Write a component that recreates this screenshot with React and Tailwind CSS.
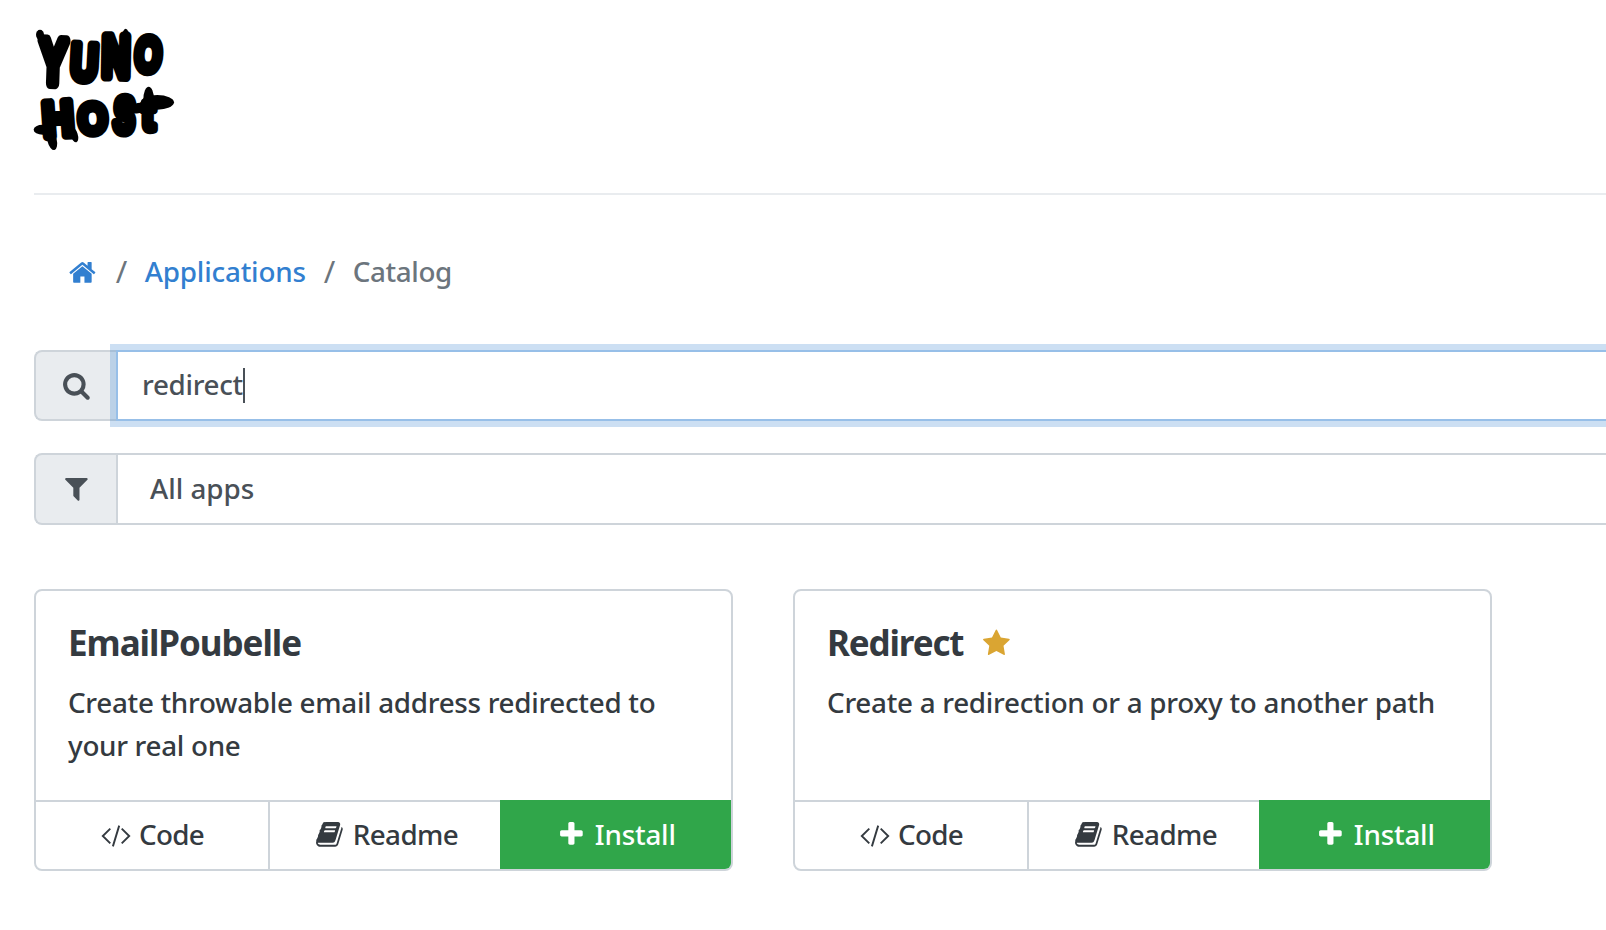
import React from 'react';

const paths = {
  search: 'M1216 832q0-185-131.5-316.5t-316.5-131.5-316.5 131.5-131.5 316.5 131.5 316.5 316.5 131.5 316.5-131.5 131.5-316.5zm512 832q0 52-38 90t-90 38q-54 0-90-38l-343-342q-179 124-399 124-143 0-273.5-55.5t-225-150-150-225-55.5-273.5 55.5-273.5 150-225 225-150 273.5-55.5 273.5 55.5 225 150 150 225 55.5 273.5q0 220-124 399l343 343q37 37 37 90z',
  home: 'M1472 992v480q0 26-19 45t-45 19h-384v-384h-256v384h-384q-26 0-45-19t-19-45v-480q0-1 .5-3t.5-3l575-474 575 474q1 2 1 6zm223-69l-62 74q-8 9-21 11h-3q-13 0-21-7l-692-577-692 577q-12 8-24 7-13-2-21-11l-62-74q-8-10-7-23.5t11-21.5l719-599q32-26 76-26t76 26l244 204v-195q0-14 9-23t23-9h192q14 0 23 9t9 23v408l219 182q10 8 11 21.5t-7 23.5z',
  filter: 'M1595 295q17 41-14 70l-493 493v742q0 42-39 59-13 5-25 5-27 0-45-19l-256-256q-19-19-19-45v-486l-493-493q-31-29-14-70 17-39 59-39h1280q42 0 59 39z',
  star: 'M1728 647q0 22-26 48l-363 354 86 500q1 7 1 20 0 21-10.5 35.5t-30.5 14.5q-19 0-40-12l-449-236-449 236q-22 12-40 12-21 0-31.5-14.5t-10.5-35.5q0-6 2-20l86-500-364-354q-25-27-25-48 0-37 56-46l502-73 225-455q19-41 49-41t49 41l225 455 502 73q56 9 56 46z',
  plus: 'M1600 736v192q0 40-28 68t-68 28h-416v416q0 40-28 68t-68 28h-192q-40 0-68-28t-28-68v-416h-416q-40 0-68-28t-28-68v-192q0-40 28-68t68-28h416v-416q0-40 28-68t68-28h192q40 0 68 28t28 68v416h416q40 0 68 28t28 68z',
  book: 'M1703 478q40 57 18 129l-275 906q-19 64-76.5 107.5t-122.5 43.5h-923q-77 0-148.5-53.5t-99.5-131.5q-24-67-2-127 0-4 3-27t4-37q1-8-3-21.5t-3-19.5q2-11 8-21t16.5-23.5 16.5-23.5q23-38 45-91.5t30-91.5q3-10 .5-30t-.5-28q3-11 17-28t17-23q21-36 42-92t25-90q1-9-2.5-32t.5-28q4-13 22-30.5t22-22.5q19-26 42.5-84.5t27.5-96.5q1-8-3-25.5t-2-26.5q2-8 9-18t18-23 17-21q8-12 16.5-30.5t15-35 16-36 19.5-32 26.5-23.5 36-11.5 47.5 5.5l-1 3q38-9 51-9h761q74 0 114 56t18 130l-274 906q-36 119-71.5 153.5t-128.5 34.5h-869q-27 0-38 15-11 16-1 43 24 70 144 70h923q29 0 56-15.5t35-41.5l300-987q7-22 5-57 38 15 59 43zm-1064 2q-4 13 2 22.5t20 9.5h608q13 0 25.5-9.5t16.5-22.5l21-64q4-13-2-22.5t-20-9.5h-608q-13 0-25.5 9.5t-16.5 22.5zm-83 256q-4 13 2 22.5t20 9.5h608q13 0 25.5-9.5t16.5-22.5l21-64q4-13-2-22.5t-20-9.5h-608q-13 0-25.5 9.5t-16.5 22.5z',
};

function Icon({ name, className = '' }) {
  return (
    <svg viewBox="0 0 1792 1792" fill="currentColor" className={`size-[28.8px] shrink-0 ${className}`}>
      <path d={paths[name]} />
    </svg>
  );
}

function CodeIcon() {
  return (
    <svg viewBox="0 0 30 22" fill="none" stroke="currentColor" strokeWidth="1.9" className="mt-3 h-[22px] w-[30px] shrink-0">
      <path d="M9.3 3.6 1.8 11l7.5 7.4M20.7 3.6l7.5 7.4-7.5 7.4M18.2.6 11.9 21.4" />
    </svg>
  );
}

// Each letter: character, left, baseline, horizontal scale, vertical scale, tilt
const letters = [
  ['Y', 58, 200, 1.2, 1.86, 2],
  ['U', 150, 189, 1.12, 1.52, 3],
  ['N', 245, 180, 1.16, 1.72, 1],
  ['O', 342, 163, 1.02, 1.45, 4],
  ['H', 72, 362, 1.27, 1.46, -4],
  ['O', 177, 354, 1.12, 1.28, -3],
  ['S', 278, 347, 0.96, 1.5, 3],
  ['t', 366, 341, 1.15, 1.33, 0],
];

function Logo() {
  return (
    <svg viewBox="42 36 423 369" className="block h-[123px] w-[141px] overflow-visible" fill="#000" stroke="#000" role="img">
      <g strokeWidth="19" strokeLinejoin="round" fontSize="100" fontFamily="'Liberation Sans', sans-serif" fontWeight="700">
        {letters.map(([c, x, y, sx, sy, r], i) => (
          <text key={i} transform={`translate(${x} ${y}) rotate(${r}) scale(${sx} ${sy})`}>{c}</text>
        ))}
      </g>
      {/* Brush tails */}
      <g stroke="none">
        <ellipse cx="60" cy="56" rx="12" ry="15" />
        <ellipse cx="68" cy="341" rx="27" ry="15" />
        <ellipse cx="96" cy="372" rx="14" ry="31" transform="rotate(-14 96 372)" />
        <ellipse cx="162" cy="356" rx="11" ry="24" transform="rotate(-18 162 356)" />
        <ellipse cx="317" cy="66" rx="11" ry="28" />
        <ellipse cx="386" cy="250" rx="16" ry="38" />
        <ellipse cx="412" cy="259" rx="50" ry="22" />
        <ellipse cx="356" cy="276" rx="36" ry="15" transform="rotate(-12 356 276)" />
      </g>
    </svg>
  );
}

function Card({ title, starred, text, textClass }) {
  return (
    <article className="flex h-[282px] w-[699px] flex-col rounded-lg border-2 border-[#ced4da]">
      <div className="h-[209px] pl-8 pt-[31px]">
        <h2 className="flex h-[41px] text-[35px] font-bold leading-[42px]">
          <span className={starred ? 'w-[139px] tracking-[-1.15px]' : 'tracking-[-1.05px]'}>{title}</span>
          {starred && <Icon name="star" className="ml-[15.5px] mt-[7px] text-[#daa532]" />}
        </h2>
        <p className={`mt-[18px] w-[620px] ${textClass}`}>{text}</p>
      </div>
      <div className="flex h-[69px] border-t-2 border-[#ced4da]">
        <a className="flex w-[234px] border-r-2 border-[#ced4da] pl-[64.5px] pt-[11px]">
          <CodeIcon />
          <span className="ml-[8.5px] tracking-[-0.7px]">Code</span>
        </a>
        <a className="flex w-[230px] pl-[45px] pt-[11px]">
          <Icon name="book" className="mt-[7px]" />
          <span className="ml-[9px] tracking-[-0.6px]">Readme</span>
        </a>
        <a className="-mt-[2px] flex flex-1 rounded-br-md bg-[#30a64a] pl-[56.5px] pt-[13px] text-white">
          <Icon name="plus" className="mt-[7px]" />
          <span className="ml-[9.5px] tracking-[-0.2px]">Install</span>
        </a>
      </div>
    </article>
  );
}

export default function App() {
  return (
    <div className="h-[930px] w-full overflow-hidden bg-white pl-[34px] font-['Noto_Sans','Open_Sans',sans-serif] text-[27.8px] font-medium leading-[43px] text-[#343a40]">
      <header className="h-[195px] border-b-2 border-[#e9ecef] pt-7">
        <Logo />
      </header>

      <nav className="mt-[55px] flex h-[43px] pl-[34px] text-[#6c757d]">
        <Icon name="home" className="mt-[7.5px] text-[#327fd0]" />
        <span className="ml-[19px] w-[28px] text-[31px] font-normal">/</span>
        <a className="w-[180px] pl-px tracking-[-0.2px] text-[#327fd0]">Applications</a>
        <span className="w-[29px] text-[31px] font-normal">/</span>
        <span className="tracking-[-0.4px]">Catalog</span>
      </nav>

      <div className="mt-[57px] flex h-[71px] w-[1640px] text-[#495057]">
        <div className="w-[82px] rounded-l-lg border-2 border-r-0 border-[#ced4da] bg-[#e9ecef] pl-[25.5px] pt-[19px]">
          <Icon name="search" />
        </div>
        <div className="flex flex-1 border-2 border-[#97bfe8] bg-white pl-[24px] pt-[11px] shadow-[0_0_0_6px_rgba(50,127,208,0.25)]">
          <span className="tracking-[-0.3px]">redirect</span>
          <span className="mt-[5px] h-[35px] w-[2px] bg-[#495057]" />
        </div>
      </div>

      <div className="mt-8 flex h-[72px] w-[1640px] text-[#495057]">
        <div className="w-[82px] rounded-l-lg border-2 border-r-0 border-[#ced4da] bg-[#e9ecef] pl-[25.5px] pt-[19px]">
          <Icon name="filter" />
        </div>
        <div className="flex-1 border-2 border-[#ced4da] bg-white pl-[32px] pt-[12px]">All apps</div>
      </div>

      <main className="mt-16 flex gap-[60px]">
        <Card title="EmailPoubelle" text="Create throwable email address redirected to your real one" textClass="tracking-[-0.29px]" />
        <Card title="Redirect" starred text="Create a redirection or a proxy to another path" textClass="tracking-[-0.27px]" />
      </main>
    </div>
  );
}
